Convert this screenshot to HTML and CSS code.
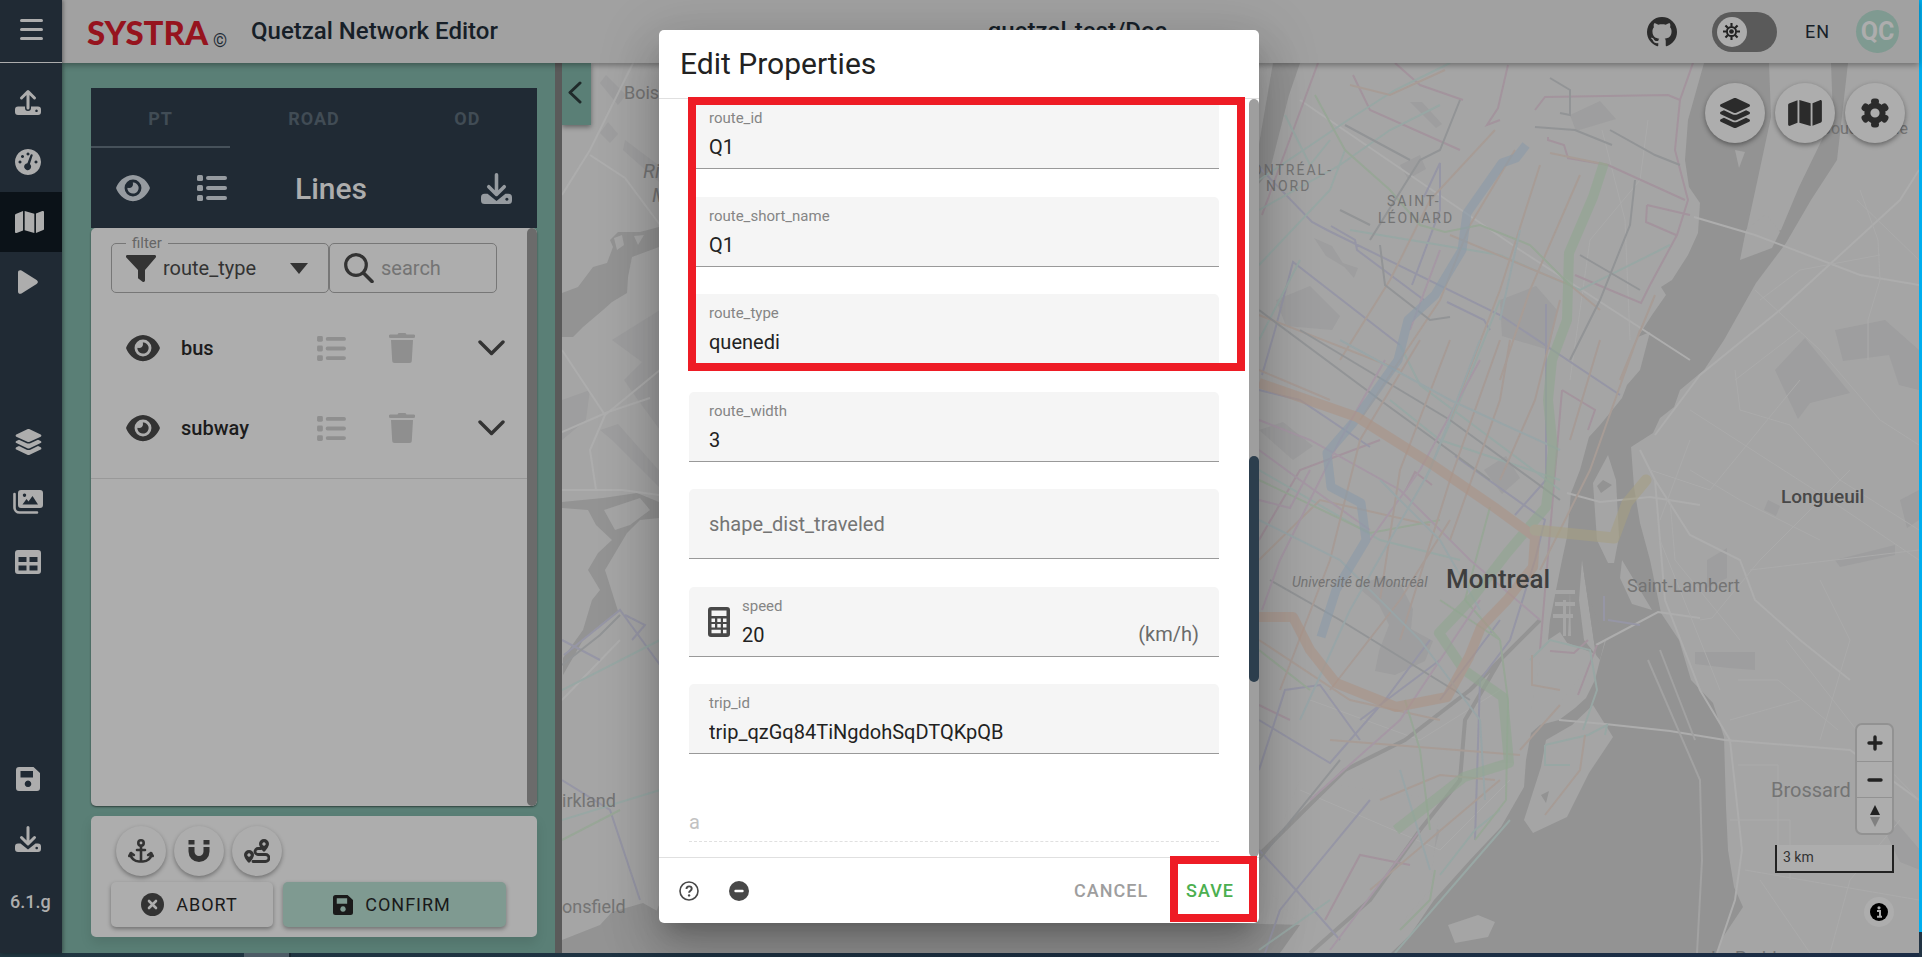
FILE: index.html
```html
<!DOCTYPE html>
<html lang="en">
<head>
<meta charset="utf-8">
<title>Quetzal Network Editor</title>
<link rel="stylesheet" href="styles.css">
</head>
<body>
<svg class="defs" aria-hidden="true">
  <symbol id="i-upload" viewBox="0 0 26 26"><path d="M13 19V3M6.500 9L13 2.500 19.500 9" fill="none" stroke="currentColor" stroke-width="3" stroke-linecap="round" stroke-linejoin="round"/><path fill-rule="evenodd" d="M3 17.500h7v1.500a3 3 0 0 0 6 0v-1.500h7a3 3 0 0 1 3 3v2.500a3 3 0 0 1-3 3H3a3 3 0 0 1-3-3v-2.500a3 3 0 0 1 3-3zM21.500 20.500a1.300 1.300 0 1 0 .01 0z" fill="currentColor"/></symbol>
  <symbol id="i-download" viewBox="0 0 26 26"><path d="M13 1.500V17M6.500 11.500L13 18 19.500 11.500" fill="none" stroke="currentColor" stroke-width="3" stroke-linecap="round" stroke-linejoin="round"/><path fill-rule="evenodd" d="M3 17.500h2.500L13 23.500 20.500 17.500H23a3 3 0 0 1 3 3v2.500a3 3 0 0 1-3 3H3a3 3 0 0 1-3-3v-2.500a3 3 0 0 1 3-3zM21.700 20.700a1.300 1.300 0 1 0 .01 0z" fill="currentColor"/></symbol>
  <symbol id="i-gauge" viewBox="0 0 26 26"><path fill="currentColor" fill-rule="evenodd" d="M13 0a13 13 0 1 0 .01 0zM17.700 6.300l-2.800 8.700a3.500 3.500 0 1 1-2.500-.8l3.200-8.500a1.200 1.200 0 0 1 2.100.6zM5 11.500a1.500 1.500 0 1 0 .01 0zM7.500 6a1.500 1.500 0 1 0 .01 0zM13 3.500a1.500 1.500 0 1 0 .01 0zM21 11.500a1.500 1.500 0 1 0 .01 0z"/></symbol>
  <symbol id="i-map" viewBox="0 0 576 512"><path fill="currentColor" d="M384 476.100L192 421.200V35.900L384 90.800V476.100zm32-1.200V88.400L543.100 37.500c15.800-6.300 32.900 5.300 32.900 22.300V394.600c0 9.800-6 18.600-15.100 22.300L416 474.800zM15.100 95.100L160 37.200V423.600L32.900 474.500C17.100 480.800 0 469.200 0 452.200V117.400c0-9.800 6-18.600 15.100-22.300z"/></symbol>
  <symbol id="i-play" viewBox="0 0 20 24"><path fill="currentColor" d="M0 2.500C0 .5 1.800-.4 3.500.6L18.600 10c1.700 1 1.700 3 0 4L3.500 23.400C1.800 24.400 0 23.500 0 21.500z"/></symbol>
  <symbol id="i-layers" viewBox="0 0 576 512"><path fill="currentColor" d="M264.500 5.200c14.900-6.900 32.100-6.900 47 0l218.600 101c8.500 3.900 13.900 12.400 13.900 21.800s-5.400 17.900-13.900 21.800l-218.600 101c-14.900 6.900-32.100 6.900-47 0L45.900 149.800C37.400 145.800 32 137.300 32 128s5.400-17.900 13.900-21.800L264.500 5.200zM476.900 209.600l53.200 24.600c8.500 3.900 13.900 12.400 13.900 21.800s-5.400 17.900-13.900 21.800l-218.600 101c-14.900 6.900-32.100 6.900-47 0L45.900 277.800C37.400 273.800 32 265.300 32 256s5.400-17.900 13.900-21.800l53.200-24.600 152 70.200c23.400 10.800 50.400 10.800 73.800 0l152-70.200zm-152 198.200l152-70.200 53.200 24.600c8.500 3.900 13.900 12.400 13.900 21.800s-5.400 17.900-13.900 21.800l-218.600 101c-14.900 6.900-32.100 6.900-47 0L45.900 405.800C37.400 401.800 32 393.300 32 384s5.400-17.900 13.900-21.800l53.200-24.600 152 70.200c23.400 10.800 50.400 10.800 73.800 0z"/></symbol>
  <symbol id="i-images" viewBox="0 0 30 24"><path fill="currentColor" fill-rule="evenodd" d="M8 0h19a3 3 0 0 1 3 3v12a3 3 0 0 1-3 3H8a3 3 0 0 1-3-3V3a3 3 0 0 1 3-3zM9.500 14.500h15.500L19.500 6l-4 5.500-2-2.500zM11.500 3.500a1.700 1.700 0 1 0 .01 0z"/><path d="M1.500 4v13.500a5 5 0 0 0 5 5H24" fill="none" stroke="currentColor" stroke-width="2.600" stroke-linecap="round"/></symbol>
  <symbol id="i-table" viewBox="0 0 26 24"><path fill="currentColor" fill-rule="evenodd" d="M3 0h20a3 3 0 0 1 3 3v18a3 3 0 0 1-3 3H3a3 3 0 0 1-3-3V3a3 3 0 0 1 3-3zM3.500 7v5h8V7zM14.500 7v5h8V7zM3.500 15.500v5h8v-5zM14.500 15.500v5h8v-5z"/></symbol>
  <symbol id="i-save" viewBox="0 0 24 24"><path fill="currentColor" fill-rule="evenodd" d="M3 0h14.500L24 6v15a3 3 0 0 1-3 3H3a3 3 0 0 1-3-3V3a3 3 0 0 1 3-3zM4.500 4v6.500h12.500V4zM12 13.500a3.300 3.300 0 1 0 .01 0z"/></symbol>
  <symbol id="i-eye" viewBox="0 0 576 512"><path fill="currentColor" d="M288 32c-80.800 0-145.500 36.800-192.600 80.600C48.600 156 17.300 208 2.500 243.700c-3.300 7.900-3.300 16.700 0 24.600C17.300 304 48.600 356 95.400 399.400C142.500 443.200 207.200 480 288 480s145.500-36.800 192.600-80.600c46.800-43.500 78.100-95.400 93-131.100c3.300-7.900 3.300-16.700 0-24.600c-14.900-35.700-46.200-87.700-93-131.100C433.500 68.800 368.800 32 288 32zM144 256a144 144 0 1 1 288 0 144 144 0 1 1 -288 0zm144-64c0 35.300-28.700 64-64 64c-7.100 0-13.900-1.200-20.300-3.300c-5.500-1.800-11.900 1.600-11.700 7.400c.3 6.900 1.300 13.800 3.200 20.700c13.700 51.200 66.400 81.600 117.600 67.900s81.600-66.400 67.900-117.600c-11.100-41.500-47.800-69.400-88.600-71.100c-5.800-.2-9.200 6.100-7.400 11.700c2.100 6.400 3.300 13.200 3.300 20.300z"/></symbol>
  <symbol id="i-list" viewBox="0 0 30 26"><g fill="currentColor"><rect y="0" width="6" height="6" rx="1.500"/><rect y="10" width="6" height="6" rx="1.500"/><rect y="20" width="6" height="6" rx="1.500"/><rect x="9" y="1" width="21" height="4" rx="2"/><rect x="9" y="11" width="21" height="4" rx="2"/><rect x="9" y="21" width="21" height="4" rx="2"/></g></symbol>
  <symbol id="i-trash" viewBox="0 0 26 30"><path fill="currentColor" d="M8.500 1.500L9.500 0h7l1 1.500H24.500A1.500 1.500 0 0 1 24.500 5h-23a1.500 1.500 0 0 1 0-3.500zM2 7h22l-1.200 20.500a2.500 2.500 0 0 1-2.500 2.500H5.700a2.500 2.500 0 0 1-2.500-2.500z"/></symbol>
  <symbol id="i-chevron" viewBox="0 0 27 16"><path d="M2 2L13.500 13.500 25 2" fill="none" stroke="currentColor" stroke-width="3.400" stroke-linecap="round" stroke-linejoin="round"/></symbol>
  <symbol id="i-filter" viewBox="0 0 30 27"><path fill="currentColor" d="M1.500 0h27a1.500 1.500 0 0 1 1.200 2.500L19 15v10.500a1.500 1.500 0 0 1-2.400 1.200l-4.600-3.500V15L.3 2.500A1.500 1.500 0 0 1 1.500 0z"/></symbol>
  <symbol id="i-search" viewBox="0 0 30 30"><circle cx="12" cy="12" r="10.300" fill="none" stroke="currentColor" stroke-width="3.200"/><path d="M19.500 20L28 28.500" stroke="currentColor" stroke-width="3.600" stroke-linecap="round"/></symbol>
  <symbol id="i-anchor" viewBox="0 0 26 24"><g fill="none" stroke="currentColor" stroke-width="2.600" stroke-linecap="round" stroke-linejoin="round"><circle cx="13" cy="4" r="2.700"/><path d="M13 7v15M9 11h8M2.500 14.500c.5 5 4 8 8.500 8h4c4.500 0 8-3 8.500-8M1.300 17l1.700-3 2.800 2M24.700 17L23 14l-2.800 2"/></g></symbol>
  <symbol id="i-magnet" viewBox="0 0 22 22"><path d="M3.500 7v4.500a7.500 7.500 0 0 0 15 0V7" fill="none" stroke="currentColor" stroke-width="6"/><path d="M.5 0h6v4.500h-6zM15.500 0h6v4.500h-6z" fill="currentColor"/></symbol>
  <symbol id="i-route" viewBox="0 0 26 24"><path fill="currentColor" fill-rule="evenodd" d="M20 0a5 5 0 0 1 5 5c0 2-2 4.700-3.800 7a1.500 1.500 0 0 1-2.400 0C17 9.700 15 7 15 5a5 5 0 0 1 5-5zM20 3.300a1.700 1.700 0 1 0 .01 0zM5 11a5 5 0 0 1 5 5c0 2-2 4.700-3.800 7a1.500 1.500 0 0 1-2.400 0C2 20.700 0 18 0 16a5 5 0 0 1 5-5zM5 14.300a1.700 1.700 0 1 0 .01 0z"/><path d="M17 9.500h-3a2.700 2.700 0 0 0 0 6h7.500a3.300 3.300 0 0 1 0 7H9" fill="none" stroke="currentColor" stroke-width="2.800" stroke-linecap="round"/></symbol>
  <symbol id="i-github" viewBox="2 2 20 20"><path fill="currentColor" d="M12,2A10,10 0 0,0 2,12C2,16.420 4.870,20.170 8.840,21.500C9.340,21.580 9.500,21.270 9.500,21C9.500,20.770 9.500,20.140 9.500,19.310C6.730,19.910 6.140,17.970 6.140,17.970C5.680,16.810 5.030,16.500 5.030,16.500C4.120,15.880 5.100,15.900 5.100,15.900C6.100,15.970 6.630,16.930 6.630,16.930C7.500,18.450 8.970,18 9.540,17.760C9.630,17.110 9.890,16.670 10.170,16.420C7.950,16.170 5.620,15.310 5.620,11.500C5.620,10.390 6,9.500 6.650,8.790C6.550,8.540 6.200,7.500 6.750,6.150C6.750,6.150 7.590,5.880 9.500,7.170C10.290,6.950 11.150,6.840 12,6.840C12.850,6.840 13.710,6.950 14.500,7.170C16.410,5.880 17.250,6.150 17.250,6.150C17.800,7.500 17.450,8.540 17.350,8.790C18,9.500 18.380,10.390 18.380,11.500C18.380,15.320 16.040,16.160 13.810,16.410C14.170,16.720 14.500,17.330 14.500,18.260C14.500,19.600 14.500,20.680 14.500,21C14.500,21.270 14.660,21.590 15.170,21.500C19.140,20.160 22,16.420 22,12A10,10 0 0,0 12,2Z"/></symbol>
  <symbol id="i-gear" viewBox="0 0 30 30"><circle cx="15" cy="15" r="7.600" fill="none" stroke="currentColor" stroke-width="6"/><g stroke="currentColor" stroke-width="6" stroke-linecap="round"><path d="M14 3.500h2"/><path d="M14 3.500h2" transform="rotate(60 15 15)"/><path d="M14 3.500h2" transform="rotate(120 15 15)"/><path d="M14 3.500h2" transform="rotate(180 15 15)"/><path d="M14 3.500h2" transform="rotate(240 15 15)"/><path d="M14 3.500h2" transform="rotate(300 15 15)"/></g></symbol>
  <symbol id="i-sun" viewBox="0 0 16 16"><circle cx="8" cy="8" r="4.300" fill="none" stroke="currentColor" stroke-width="1.800"/><circle cx="8" cy="8" r="2.200" fill="currentColor"/><path d="M8 0v3M8 13v3M0 8h3M13 8h3M2.300 2.300l2.200 2.200M11.500 11.500l2.200 2.200M2.300 13.700l2.200-2.200M11.500 4.500l2.200-2.200" stroke="currentColor" stroke-width="2"/></symbol>
  <symbol id="i-calc" viewBox="0 0 22 30"><path fill="currentColor" fill-rule="evenodd" d="M3 0h16a3 3 0 0 1 3 3v24a3 3 0 0 1-3 3H3a3 3 0 0 1-3-3V3a3 3 0 0 1 3-3zM3.500 3.500v5.500h15V3.500zM3.500 11.500v3.500h3.500v-3.500zM9.300 11.500v3.500h3.500v-3.500zM15 11.500v3.500h3.500v-3.500zM3.500 17v3.500h3.500V17zM9.300 17v3.500h3.500V17zM15 17v3.500h3.500V17zM3.500 22.800v3.500h9.300v-3.500zM15 22.800v3.500h3.500v-3.500z"/></symbol>
</svg>

<div class="app">
  <aside class="sidebar">
    <button class="menu" aria-label="Menu"><span></span><span></span><span></span></button>
    <nav class="nav">
      <button class="nav-item" aria-label="Import"><svg width="26" height="26"><use href="#i-upload"/></svg></button>
      <button class="nav-item" aria-label="Run"><svg width="26" height="26"><use href="#i-gauge"/></svg></button>
      <button class="nav-item active" aria-label="Map"><svg width="29" height="26"><use href="#i-map"/></svg></button>
      <button class="nav-item gap-after" aria-label="Play"><svg width="20" height="24"><use href="#i-play"/></svg></button>
      <button class="nav-item" aria-label="Layers"><svg width="29" height="26"><use href="#i-layers"/></svg></button>
      <button class="nav-item" aria-label="Results"><svg width="30" height="24"><use href="#i-images"/></svg></button>
      <button class="nav-item" aria-label="Tables"><svg width="26" height="24"><use href="#i-table"/></svg></button>
      <button class="nav-item push" aria-label="Save"><svg width="24" height="24"><use href="#i-save"/></svg></button>
      <button class="nav-item" aria-label="Download"><svg width="26" height="26"><use href="#i-download"/></svg></button>
      <span class="version">6.1.g</span>
    </nav>
  </aside>

  <div class="main">
    <header class="topbar">
      <div class="brand"><span class="logo">SYSTRA</span><span class="mark">©</span><h1 class="app-title">Quetzal Network Editor</h1></div>
      <span class="project">quetzal-test/Doc</span>
      <div class="tools">
        <a class="github" href="#" aria-label="GitHub"><svg width="30" height="30"><use href="#i-github"/></svg></a>
        <label class="switch"><input type="checkbox" aria-label="Dark mode"><span class="knob"><svg width="17" height="17"><use href="#i-sun"/></svg></span></label>
        <button class="lang">EN</button>
        <button class="avatar">QC</button>
      </div>
    </header>

    <div class="workspace">
      <section class="panel">
        <div class="editor">
          <div class="tabs" role="tablist">
            <button class="tab selected" role="tab">PT</button><button class="tab wide" role="tab">ROAD</button><button class="tab" role="tab">OD</button>
          </div>
          <div class="toolbar">
            <button aria-label="Show all"><svg width="34" height="30"><use href="#i-eye"/></svg></button>
            <button class="all-list" aria-label="List"><svg width="30" height="26"><use href="#i-list"/></svg></button>
            <h2>Lines</h2>
            <button aria-label="Download lines"><svg width="31" height="31"><use href="#i-download"/></svg></button>
          </div>
          <div class="list">
            <div class="list-body">
              <div class="filters">
                <div class="box filter">
                  <label for="filter">filter</label>
                  <svg width="30" height="27"><use href="#i-filter"/></svg>
                  <select id="filter"><option>route_type</option></select>
                  <span class="caret"></span>
                </div>
                <div class="box search"><svg width="30" height="30"><use href="#i-search"/></svg><input type="text" placeholder="search" aria-label="search"></div>
              </div>
              <div class="row"><button aria-label="Show bus"><svg width="34" height="30"><use href="#i-eye"/></svg></button><span class="row-name">bus</span><button class="off" aria-label="Edit bus"><svg width="29" height="25"><use href="#i-list"/></svg></button><button class="off bin" aria-label="Delete bus"><svg width="26" height="30"><use href="#i-trash"/></svg></button><button class="expand" aria-label="Expand bus"><svg width="27" height="16"><use href="#i-chevron"/></svg></button></div>
              <div class="row"><button aria-label="Show subway"><svg width="34" height="30"><use href="#i-eye"/></svg></button><span class="row-name">subway</span><button class="off" aria-label="Edit subway"><svg width="29" height="25"><use href="#i-list"/></svg></button><button class="off bin" aria-label="Delete subway"><svg width="26" height="30"><use href="#i-trash"/></svg></button><button class="expand" aria-label="Expand subway"><svg width="27" height="16"><use href="#i-chevron"/></svg></button></div>
              <hr>
            </div>
            <div class="list-scroll"></div>
          </div>
        </div>
        <div class="actions">
          <div class="rounds">
            <button class="round" aria-label="Anchor"><svg width="26" height="24"><use href="#i-anchor"/></svg></button>
            <button class="round" aria-label="Snap"><svg width="22" height="22"><use href="#i-magnet"/></svg></button>
            <button class="round" aria-label="Follow roads"><svg width="26" height="24"><use href="#i-route"/></svg></button>
          </div>
          <div class="commit">
            <button class="btn abort"><svg width="23" height="23" viewBox="0 0 23 23"><circle cx="11.500" cy="11.500" r="11.500" fill="#333"/><path d="M8 8l7 7M15 8l-7 7" stroke="#adadad" stroke-width="2.600" stroke-linecap="round"/></svg>ABORT</button>
            <button class="btn confirm"><svg width="20" height="20"><use href="#i-save"/></svg>CONFIRM</button>
          </div>
        </div>
      </section>
      <div class="resizer"></div>

      <section class="map">
        <svg class="map-canvas" viewBox="562 63 1357 890" preserveAspectRatio="xMaxYMin slice">
          <rect x="562" y="63" width="1357" height="890" fill="#a5a5a5"/>
          <g fill="#9e9e9f">
            <path d="M606 75l20 20-8 10-18-22zM625 140l60 45v20l-62-55zM608 122l10 12-8 9-10-10zM612 340l48-30v120l-22-30-14-20 18-18zM600 430l18-6 44 50v16l-50-50zM562 400l28-10-4 30-24 20z"/>
            <path d="M1355 585l28-8 18 8 12 24-2 20 22 12-8 20-30 14-20-4 4-20 10-26-10-20z"/><path d="M1276 300l34-14 30 30-8 14-46-4zM1500 300l36-14 21 24-8 40-47-14zM1775 370l30-32 45 55-40 10-12 16zM1835 330l50-10 34 30v40l-20-5-10-30-46 6z"/>
            <path d="M1695 652h60v18l-26-2-34-4zM1707 560l20-12v30l-20 10zM1835 560l60-15v10l-55 12zM1355 855l20-25 35-10 30 10-10 35-55 8zM1570 115l30-14 16 18-40 12zM1410 102l12 0 20 22-6 4zM1314 238l18 8 14 22-20-12zM1340 262l18 6-4 10zM1768 500l12 6-4 10-12-6zM1900 500l19-10v30l-12 8zM1860 780l60 70v20l-20-8zM1400 165l20-10 6 14-18 10zM1259 430l24-8 30 24-20 14zM1484 470l22-14 14 22-18 16z"/>
          </g>
          <g fill="#939393">
            <path d="M562 293L578 287 593 267 607 263 613 247 610 240 618 232 640 232 659 227V247L632 257 628 277 627 293 612 302 603 310 583 327 573 337H562z"/>
            <path d="M562 502L603 498 637 493 659 502V518L640 520 627 533 605 570 618 611 600 625 583 640 563 675V658L583 630 592 600 600 590 588 570 598 553 612 540 596 525 588 510 562 508z"/>
            <path d="M562 940L600 925 612 912 643 903 659 912V953H562z"/>
            <path d="M1273 63H1300L1289 95 1270 170 1258 185V150z"/>
            <path d="M659 905L1300 925 1280 953H640z" fill="#939393"/>
            <path d="M1704 63L1688 120 1685 160 1689 187 1700 203 1698 233 1688 255 1672 280 1661 287 1666 295 1652 315 1638 337 1650 332 1640 370 1627 385 1622 398 1614 408 1600 425 1589 437 1580 470 1571 493 1567 537 1562 560 1556 590 1550 620 1548 640 1560 632 1575 655 1597 655 1600 640 1606 640 1600 660 1595 680 1586 698 1575 708 1559 720 1540 725 1531 733 1526 760 1524 787 1501 827 1470 860 1434 900 1410 935 1391 953H1717L1721 940 1743 907 1734 887 1728 850 1726 807 1724 737 1713 703 1691 680 1679 640 1661 613 1650 560 1640 523 1634 487 1631 447 1653 433 1660 418 1674 407 1680 390 1704 370 1724 340 1756 283 1786 243 1811 200 1837 160 1848 63H1831L1833 117 1799 187 1781 230 1743 247 1756 187 1771 117 1769 63z"/>
          </g>
          <g fill="#a5a5a5">
            <path d="M1542 725L1598 655 1560 640 1540 660 1530 715z"/>
            <path d="M1582 560L1596 655 1584 640 1579 600zM1259 880L1300 925 1400 925 1430 890 1440 800 1300 780z"/>
            <path d="M1608 455L1616 480 1619 537 1614 563 1608 563 1597 540 1593 483zM1593 705L1613 737 1589 773 1567 817 1533 833 1524 820 1541 767 1546 740 1572 725zM1448 925L1478 915 1495 922 1488 937 1455 943zM1740 260l6-30 20-16 14 18-8 16zM1622 560l30 50-20-6-12-26z"/>
            <path d="M604 510L640 498 650 510 630 525 615 530zM614 238l8-3 2 10-7 5zM634 236l10-1-6 10z"/>
            <path d="M1575 590h-22v4h22zM1575 602h-20v4h20zM1573 614h-20v4h20zM1570 592l-2 44h3zM1563 600v36h3v-36zM1735 150l4 18 6-16z"/>
          </g>
          <path d="M1612 485l-9-5-6 6 4 7zM1541 795l5 8 3-12z" fill="#939393"/>
          <path d="M1582 560L1596 655 1600 660 1605 640 1590 600z" fill="#939393"/>
          <g class="roads">
            <path d="M562 195L590 150 633 63M590 155L625 178 660 225M562 350L605 415 660 370M562 432L608 412 650 398M605 415L590 450 596 490M562 490h60l37 5M562 700L620 640M1300 100L1520 250 1690 360M1694 217L1755 235 1860 275 1919 285M1567 493L1600 502 1650 497 1700 505M1596 645L1658 612 1700 618M1640 450L1655 480 1690 535 1740 560 1755 600 1800 640 1850 680M1655 480L1665 600 1700 690 1730 740 1742 850 1735 900 1717 953M1559 720L1605 724 1670 731 1725 740 1850 750 1919 800M1655 435L1700 375 1780 310 1900 200 1919 170"/>
            <path class="minor" d="M1690 410L1760 455 1830 500 1919 560M1690 470L1740 500 1820 540M1650 470L1710 490 1800 380M1700 620L1712 618 1760 560 1850 470M1740 410L1790 425 1840 480 1919 530M1750 570L1919 550M1860 190L1878 240 1880 280 1868 320 1868 360M1857 200L1919 260M1755 290L1820 350 1880 420 1919 445M1735 370L1740 410M1735 380L1800 330M1730 820h60v60M1738 680h40l60 50M1730 720L1800 700M1820 740L1850 640 1820 580M1786 640L1880 760 1919 800M1738 765h40v80M1760 880L1810 953M1830 953L1850 880 1900 820M1745 870L1919 900M1570 380L1590 240 1640 180 1648 120M1602 130L1625 220 1630 340M1310 700L1420 740 1500 690M1300 790L1440 850 1510 780M1760 300L1800 270 1880 255M1670 500L1675 560 1740 640M1660 540L1720 690M1690 440L1660 520"/>
          </g>
          <g class="bold-roads"><path d="M1259 855L1345 770 1405 740 1470 690 1540 620M1310 953L1370 900 1420 830 1460 780 1465 720 1500 660"/></g>
          <path d="M1648 660L1700 780 1702 860 1697 953M1660 650L1695 740" fill="none" stroke="#a2a2a2" stroke-width="2"/>
          <g class="routes">
            <path stroke="#a3949d" d="M1318 63L1284 155 1262 215M1353 75L1370 110 1460 150M1395 63L1420 85 1463 100M1693 63L1680 100 1675 150 1688 200 1677 235 1650 285 1641 303 1610 290 1575 275M1647 205L1690 215M1647 205L1646 222 1676 235M1500 120L1487 125 1498 108 1508 65M1535 110L1545 97 1668 95 1680 100M1548 137L1548 140 1564 145 1568 158 1608 165 1685 200M1259 540L1300 470 1380 440M1562 390L1595 410 1588 430M1562 390L1540 650M1406 490L1415 472 1432 485M1550 651L1574 653 1588 640M1597 645L1578 695M1259 705L1290 720M1325 920L1360 855 1410 865"/>
            <path stroke="#9696a5" d="M1259 390L1300 400 1370 447M1262 375L1275 330 1293 262 1400 345M1259 167L1312 222 1327 230 1500 315 1620 395M1331 226L1355 240 1357 250 1424 300M1447 302L1484 320 1490 330M1424 197L1440 163 1440 210 1412 285M1546 304V480L1515 515M1455 456L1545 520 1535 560 1510 640 1480 680 1475 840M1259 720L1330 763 1385 700 1430 640M1259 770L1285 690 1320 685 1360 740M1265 953L1280 910 1300 885 1370 800M1500 620L1440 700M564 655L620 610 660 665M562 640L600 660M562 780L610 810 640 900M625 615L645 625 632 640M1604 596V621M1608 620L1640 625M1360 720L1440 660M1259 850L1296 890 1340 940"/>
            <path stroke="#98a7a4" d="M1259 180L1345 122 1395 90 1450 63M1259 210L1340 165 1390 130 1440 105M1285 115L1310 165 1330 140M1259 265L1330 190 1345 150M1259 340L1300 260M1350 230L1500 255 1580 290 1670 245M1390 400L1440 440 1560 480M1400 345L1420 385 1560 490M1259 470L1380 540 1460 560M1425 480L1460 400 1500 300M1530 660L1550 640 1590 650 1597 690 1583 730M1545 745L1588 735 1607 725 1605 735M1545 745V765H1570M1259 950L1330 900M1440 875L1475 830 1500 810M1510 820L1395 953M562 820L660 790M562 690L660 640"/>
            <path stroke="#a79c96" d="M1259 315L1400 370M1350 85L1390 95 1445 70M1495 130L1430 200 1390 280 1340 360M1515 150L1470 225 1440 300 1360 420M1540 165L1500 290 1450 420M1580 175L1530 290 1500 380M1640 330L1590 470 1540 570M1655 295L1620 380M1608 165L1550 153M1450 235L1570 285 1600 310M1259 560L1320 500 1430 525M1532 655L1532 685 1560 690M1495 780L1440 775 1380 800M1500 780L1370 890M1330 740L1520 755M1520 750L1560 705M1259 640L1350 700 1440 720M1585 735L1580 770 1545 815"/>
            <path stroke="#98a697" d="M1315 95L1345 150 1390 190 1420 225 1445 232 1480 225 1530 245 1570 285M1259 480L1370 533 1440 520M1490 507L1465 600 1500 640M1500 640L1508 700 1506 800 1475 840M1435 870L1430 900 1400 930M562 840L620 810M1500 640L1440 600M1259 650L1310 690M1405 700L1420 750 1430 830"/>
            <path stroke="#929496" d="M1460 100L1440 150 1420 160 1370 240M1550 78L1570 90 1570 115 1560 113M1610 130L1655 155 1680 165M1535 127L1575 130 1612 145M1635 180L1630 225 1600 300 1570 360M1259 310L1380 400 1490 480M1580 255L1640 290M1345 125L1410 160M1340 210L1370 225M1300 330L1450 420 1560 500M1270 580L1340 620 1470 700M1259 860L1340 760M562 665L600 635 620 615M1380 245L1385 285 1430 320 1450 317"/>
          </g>
          <g class="routes">
            <path stroke="#a598a4" d="M1259 420L1310 440 1400 490 1470 560 1540 620M1259 450L1300 480 1370 530M1385 360L1340 440 1280 560 1262 610M1310 800L1400 720 1480 600M1370 540L1420 470 1480 360M1330 950L1420 830M1259 500L1290 508 1310 470M1440 250L1410 330"/>
            <path stroke="#a69b96" d="M1420 340L1360 440 1330 560 1280 690M1450 340L1400 470 1380 600M1500 340L1450 480 1400 640M1259 370L1330 400M1330 690L1400 600 1450 520M1510 340L1500 400 1450 540M1600 340L1570 440M1560 300L1535 400 1500 480"/>
            <path stroke="#99a5a7" d="M1340 340L1450 400 1560 450M1480 340L1430 470 1350 610 1300 720M1259 520L1340 560 1420 640M1380 480L1440 540 1480 610M1400 770L1430 870M1420 640L1480 720 1485 800M1520 230L1500 320"/>
          </g>
          <g fill="none" stroke-linejoin="round" opacity=".6">
            <path stroke="#8b9ba9" stroke-width="9" d="M1526 145L1516 158 1502 163 1467 213 1462 250 1435 295 1408 320 1398 360 1353 423 1327 453 1331 487 1361 503 1366 540 1336 590 1321 637"/>
            <path stroke="#91a691" stroke-width="10" d="M1604 163L1593 197 1569 253 1567 320 1552 360 1548 400 1553 450 1546 507 1507 553 1473 597 1439 633 1464 670 1503 697 1509 763 1464 777 1396 830"/>
            <path stroke="#ab9487" stroke-width="10" d="M1259 383L1357 417 1430 463 1494 507 1535 537 1533 567 1507 600 1481 627 1469 657 1447 697 1396 707 1336 683 1310 650 1293 617H1259"/>
            <path stroke="#a6a084" stroke-width="11" stroke-linecap="round" d="M1535 530L1614 538 1627 503 1646 480"/>
          </g>
          <g class="labels">
            <text x="624" y="99" font-size="18">Boisbriand</text>
            <text x="643" y="178" font-size="20" class="it">Rivière</text>
            <text x="652" y="202" font-size="20" class="it">Mille</text>
            <text x="562" y="807" font-size="18">irkland</text>
            <text x="562" y="913" font-size="18">onsfield</text>
            <text x="1333" y="175" font-size="14" class="caps" text-anchor="end">MONTRÉAL-</text>
            <text x="1266" y="191" font-size="14" class="caps">NORD</text>
            <text x="1387" y="206" font-size="14" class="caps">SAINT-</text>
            <text x="1378" y="223" font-size="14" class="caps">LÉONARD</text>
            <text x="1292" y="587" font-size="14" class="it">Université de Montréal</text>
            <text x="1446" y="588" font-size="26" class="city">Montreal</text>
            <text x="1781" y="503" font-size="19" class="town">Longueuil</text>
            <text x="1627" y="592" font-size="18">Saint-Lambert</text>
            <text x="1771" y="797" font-size="20">Brossard</text>
            <text x="1908" y="134" font-size="16" text-anchor="end">Boucherville</text>
            <text x="1711" y="964" font-size="18">La Prairie</text>
          </g>
        </svg>
        <button class="collapse" aria-label="Collapse panel"><svg width="14" height="23" viewBox="0 0 14 23"><path d="M12 2L2 11.500 12 21" fill="none" stroke="#1f2a2a" stroke-width="3" stroke-linecap="round" stroke-linejoin="round"/></svg></button>
        <div class="map-buttons">
          <button class="map-btn" aria-label="Layers"><svg width="34" height="30"><use href="#i-layers"/></svg></button>
          <button class="map-btn" aria-label="Basemap"><svg width="34" height="30"><use href="#i-map"/></svg></button>
          <button class="map-btn" aria-label="Settings"><svg width="30" height="30"><use href="#i-gear"/></svg></button>
        </div>
        <div class="map-corner">
          <div class="zoom">
            <button aria-label="Zoom in"><svg width="16" height="16" viewBox="0 0 16 16"><path d="M8 2v12M2 8h12" stroke="#222" stroke-width="3.400" stroke-linecap="round"/></svg></button>
            <button aria-label="Zoom out"><svg width="16" height="16" viewBox="0 0 16 16"><path d="M2 8h12" stroke="#222" stroke-width="3.400" stroke-linecap="round"/></svg></button>
            <button aria-label="Reset north"><svg width="10" height="22" viewBox="0 0 10 22"><path d="M0 10L5 0l5 10z" fill="#222"/><path d="M0 12L5 22l5-10z" fill="#808080"/></svg></button>
          </div>
          <div class="scale">3 km</div>
          <button class="info" aria-label="Attribution"><svg width="18" height="18" viewBox="0 0 18 18"><circle cx="9" cy="9" r="9" fill="#000"/><circle cx="9" cy="4.800" r="1.600" fill="#adadad"/><path d="M7 8h3v5.500M7 13.800h5" stroke="#adadad" stroke-width="2" fill="none"/></svg></button>
        </div>
      </section>
    </div>
  </div>
</div>
<div class="strip"><span class="strip-thumb"></span></div>
<div class="edge"></div>

<div class="overlay">
  <form class="modal" role="dialog" aria-labelledby="dialog-title">
    <h2 class="modal-title" id="dialog-title">Edit Properties</h2>
    <div class="modal-body">
      <div class="scroll-area">
        <div class="fields">
          <div class="field"><label for="f1">route_id</label><input id="f1" type="text" value="Q1"></div>
          <div class="field"><label for="f2">route_short_name</label><input id="f2" type="text" value="Q1"></div>
          <div class="field"><label for="f3">route_type</label><input id="f3" type="text" value="quenedi"></div>
          <div class="field"><label for="f4">route_width</label><input id="f4" type="text" value="3"></div>
          <div class="field empty"><input id="f5" type="text" placeholder="shape_dist_traveled" aria-label="shape_dist_traveled"></div>
          <div class="field with-icon"><svg width="22" height="30"><use href="#i-calc"/></svg><div class="stack"><label for="f6">speed</label><input id="f6" type="text" value="20"></div><span class="unit">(km/h)</span></div>
          <div class="field"><label for="f7">trip_id</label><input id="f7" type="text" value="trip_qzGq84TiNgdohSqDTQKpQB"></div>
        </div>
        <input class="disabled-field" type="text" value="a" disabled aria-label="a">
      </div>
      <div class="track"><div class="thumb"></div></div>
    </div>
    <div class="modal-actions">
      <button type="button" class="icon-btn" aria-label="Help"><svg width="20" height="20" viewBox="0 0 20 20"><circle cx="10" cy="10" r="9" fill="none" stroke="#484848" stroke-width="1.600"/><path d="M7.500 8c0-1.500 1-2.600 2.600-2.600s2.600 1 2.600 2.300c0 2-2.600 2-2.600 4" fill="none" stroke="#484848" stroke-width="1.900"/><circle cx="10.100" cy="14.400" r="1.200" fill="#484848"/></svg></button>
      <button type="button" class="icon-btn" aria-label="Remove"><svg width="20" height="20" viewBox="0 0 20 20"><circle cx="10" cy="10" r="10" fill="#484848"/><path d="M6.500 10h7" stroke="#fff" stroke-width="2.400" stroke-linecap="round"/></svg></button>
      <button type="button" class="text-btn cancel">CANCEL</button>
      <button type="submit" class="text-btn save">SAVE</button>
    </div>
    <div class="callout callout-fields"></div>
    <div class="callout callout-save"></div>
  </form>
</div>
</body>
</html>
```

FILE: styles.css
```css
* { box-sizing: border-box; }
body { margin: 0; height: 100vh; overflow: hidden; display: grid; grid-template: 1fr 4px / 1fr 3px; font-family: Roboto, "Noto Sans", sans-serif; font-size: 20px; color: #222; }
button, input, select { font: inherit; color: inherit; background: none; border: 0; padding: 0; margin: 0; outline: 0; }
button { display: flex; align-items: center; justify-content: center; }
svg { flex: none; display: block; }
.defs { position: absolute; width: 0; height: 0; }

.app { display: flex; min-height: 0; min-width: 0; }
.edge { grid-column: 2; grid-row: 1 / 3; background: linear-gradient(to top, #223444 25px, #00aeef 25px); }
.strip { grid-column: 1; grid-row: 2; background: linear-gradient(90deg, #203640, #1b2c45); display: flex; padding-left: 244px; }
.strip-thumb { width: 47px; background: #4d5c66; border-right: 2px solid #182730; }

/* side navigation */
.sidebar { width: 62px; flex: none; background: #202a34; color: #adadad; display: flex; flex-direction: column; z-index: 3; box-shadow: 1px 0 4px rgba(0,0,0,.4); }
.menu { height: 63px; flex: none; flex-direction: column; gap: 6px; padding: 0 20px 4px; border-bottom: 1px solid #adadad; align-items: stretch; }
.menu span { height: 3px; border-radius: 2px; background: #adadad; width: 23px; }
.nav { flex: 1; display: flex; flex-direction: column; padding-top: 9px; }
.nav-item { height: 60px; flex: none; padding-right: 6px; }
.nav-item.active { background: #0b1218; padding-right: 3px; }
.gap-after { margin-bottom: 100px; }
.push { margin-top: auto; }
.version { height: 84px; line-height: 66px; padding-left: 10px; font-size: 18px; font-weight: 500; color: #adadad; }

/* top bar */
.main { flex: 1; min-width: 0; display: flex; flex-direction: column; }
.topbar { height: 63px; flex: none; background: #a1a1a1; display: flex; justify-content: space-between; align-items: center; padding: 0 20px 0 25px; z-index: 2; box-shadow: 0 2px 6px rgba(0,0,0,.35); }
.brand { display: flex; align-items: center; }
.logo { font: 900 33px/36px Lato, sans-serif; color: #96141e; width: 126px; }
.mark { width: 38px; font-size: 18px; padding-top: 18px; color: #222b35; }
.app-title, .project { margin: 0; font-size: 24px; line-height: 32px; font-weight: 500; color: #171f28; padding-bottom: 2px; }
.project { padding-left: 10px; }
.tools { display: flex; align-items: center; }
.github { color: #2b2b2b; margin-right: 35px; }
.switch { position: relative; width: 65px; height: 40px; border-radius: 20px; background: #5a5a5a; padding: 5px; margin-right: 28px; }
.switch input { position: absolute; inset: 0; width: 100%; height: 100%; margin: 0; opacity: 0; }
.knob { width: 30px; height: 30px; border-radius: 50%; background: #adadad; display: grid; place-items: center; color: #222; }
.lang { font-size: 18px; letter-spacing: 1px; color: #171f28; margin-right: 26px; }
.avatar { width: 43px; height: 43px; border-radius: 50%; background: #7f9a91; color: #adadad; font-size: 25px; font-weight: 700; }

/* editing panel */
.workspace { flex: 1; min-height: 0; display: flex; }
.panel { width: 493px; flex: none; background: #5a7f76; padding: 25px 18px 16px 29px; display: flex; flex-direction: column; gap: 10px; }
.resizer { width: 7px; flex: none; background: #5a5a5a; }
.editor { flex: 1; min-height: 0; display: flex; flex-direction: column; }
.tabs { display: flex; height: 60px; background: #202a34; }
.tab { flex: 139; font-size: 18px; font-weight: 700; color: #414c55; letter-spacing: 1px; border-bottom: 2px solid transparent; padding-top: 2px; }
.tab.wide { flex: 167; }
.tab.selected { border-color: #46515a; }
.toolbar { display: flex; align-items: center; height: 80px; background: #202a34; color: #969ba0; padding: 0 25px; }
.all-list { margin-left: 47px; }
.toolbar h2 { flex: 1; margin: 0; padding-right: 46px; text-align: center; font-size: 30px; font-weight: 500; color: #adadad; }
.list { flex: 1; min-height: 0; display: flex; background: #adadad; border-radius: 5px; overflow: hidden; box-shadow: 0 1px 2px rgba(0,0,0,.5); }
.list-body { flex: 1; padding-top: 15px; }
.list-scroll { width: 10px; border-radius: 5px; background: #6b6b6b; }
.filters { display: flex; padding: 0 20px; margin-bottom: 15px; }
.box { position: relative; height: 50px; display: flex; align-items: center; border: 1px solid #777; border-radius: 5px; color: #333; }
.filter { width: 218px; padding: 0 20px 0 14px; gap: 7px; }
.filter label { position: absolute; left: 14px; top: -11px; padding: 0 6px; background: #adadad; font-size: 15px; line-height: 20px; color: #666; }
.filter select { flex: 1; min-width: 0; appearance: none; }
.caret { border: 9px solid transparent; border-top: 11px solid #333; border-bottom: 0; }
.search { width: 168px; padding: 0 14px; gap: 7px; }
.search input { width: 100px; }
::placeholder { color: #747474; opacity: 1; }
.row { height: 80px; display: flex; align-items: center; padding: 0 22px 0 35px; color: #333; }
.row-name { width: 136px; margin-left: 21px; font-weight: 500; color: #1c1c1c; }
.off { color: #8f8f8f; }
.bin { margin-left: 43px; }
.expand { margin-left: auto; }
hr { margin: 10px 0 0; border: 0; border-top: 1px solid #999; }

.actions { background: #adadad; border-radius: 5px; padding: 10px 31px 10px 20px; display: flex; flex-direction: column; gap: 6px; box-shadow: 0 6px 12px rgba(0,0,0,.1); }
.rounds { display: flex; gap: 8px; padding-left: 5px; }
.round { width: 50px; height: 50px; border-radius: 50%; background: #adadad; color: #333; box-shadow: 0 2px 4px rgba(0,0,0,.35); }
.commit { display: flex; gap: 10px; }
.btn { height: 45px; border-radius: 5px; gap: 12px; padding-right: 5px; font-size: 18px; letter-spacing: 1px; color: #1a1a1a; box-shadow: 0 2px 4px rgba(0,0,0,.35); }
.abort { width: 162px; }
.confirm { flex: 1; background: #7f9a91; }

/* map */
.map { flex: 1; min-width: 0; position: relative; overflow: hidden; background: #a5a5a5; }
.map-canvas { width: 100%; height: 100%; }
.roads { fill: none; stroke: #adadad; stroke-width: 2; }
.roads .minor { stroke: #ababab; stroke-width: 1; }
.bold-roads { fill: none; stroke: #949494; stroke-width: 4; stroke-linejoin: round; }
.routes { fill: none; stroke-width: 2; }
.labels { fill: #747474; font-family: Roboto, sans-serif; }
.it { font-style: italic; }
.caps { letter-spacing: 2px; }
.city { fill: #3e3e3e; font-weight: 500; }
.town { fill: #484848; font-weight: 500; }
.collapse { position: absolute; left: 0; top: 0; width: 29px; height: 62px; padding: 0 4px 4px 0; background: #5a7f76; box-shadow: 0 2px 5px rgba(0,0,0,.4); }
.map-buttons { position: absolute; right: 14px; top: 20px; display: flex; gap: 10px; }
.map-btn { width: 60px; height: 60px; border-radius: 50%; background: #adadad; color: #2b2b2b; box-shadow: 0 2px 5px rgba(0,0,0,.4); }
.map-corner { position: absolute; right: 25px; bottom: 26px; display: flex; flex-direction: column; align-items: flex-end; }
.zoom { width: 39px; background: #adadad; border: 2px solid #929292; border-radius: 7px; }
.zoom button { width: 100%; height: 36px; }
.zoom button + button { border-top: 1px solid #929292; }
.scale { width: 119px; height: 28px; margin-top: 10px; padding-left: 6px; border: 2px solid #222; border-top: 0; background: #adadad; font-size: 14px; line-height: 24px; color: #333; }
.info { width: 30px; height: 30px; margin-top: 24px; border-radius: 50%; background: #adadad; }

/* dialog */
.overlay { position: absolute; inset: 0 4px 0 0; z-index: 5; display: flex; justify-content: center; padding: 30px 0 34px; }
.modal { position: relative; width: 600px; display: flex; flex-direction: column; background: #fff; border-radius: 5px; box-shadow: 0 14px 19px -9px rgba(0,0,0,.2), 0 30px 47px 4px rgba(0,0,0,.14), 0 11px 57px 10px rgba(0,0,0,.12); }
.modal-title { margin: 0; padding: 0 21px; height: 69px; line-height: 68px; font-size: 30px; font-weight: 400; color: #222; border-bottom: 1px solid #e0e0e0; }
.modal-body { flex: 1; min-height: 0; display: flex; }
.scroll-area { flex: 1; padding: 0 30px 15px; display: flex; flex-direction: column; }
.fields { flex: 1; display: grid; grid-auto-rows: 1fr; }
.field { height: 70px; padding: 9px 20px 0; background: #f5f5f5; border-bottom: 1px solid #999; border-radius: 5px 5px 0 0; display: flex; flex-direction: column; }
.field label { font-size: 15px; line-height: 20px; color: #858585; }
.field input { height: 38px; color: #222; width: 100%; }
.field.empty { justify-content: center; padding-top: 0; }
.with-icon { flex-direction: row; padding-left: 19px; gap: 12px; }
.with-icon svg { margin-top: 11px; color: #484848; }
.stack { flex: 1; display: flex; flex-direction: column; }
.unit { align-self: flex-end; line-height: 24px; padding-bottom: 10px; color: #6b6b6b; }
.disabled-field { height: 60px; padding-top: 20px; border-bottom: 1px dashed #e0e0e0; color: #c2c2c2; }
.track { width: 10px; border-radius: 5px; background: #9e9e9e; padding-top: 357px; }
.thumb { height: 226px; border-radius: 5px; background: #2c3e4d; }
.modal-actions { height: 66px; flex: none; display: flex; align-items: center; padding: 0 25px 0 20px; border-top: 1px solid #e0e0e0; }
.icon-btn { width: 20px; margin-right: 30px; }
.text-btn { font-size: 18px; font-weight: 500; letter-spacing: 1px; }
.cancel { margin-left: auto; margin-right: 38px; color: #9e9e9e; }
.save { color: #4caf50; }
.callout { position: absolute; border: 8px solid #ee1c25; pointer-events: none; }
.callout-fields { left: 29px; top: 67px; width: 557px; height: 274px; }
.callout-save { right: 2px; bottom: 1px; width: 87px; height: 66px; }
```
